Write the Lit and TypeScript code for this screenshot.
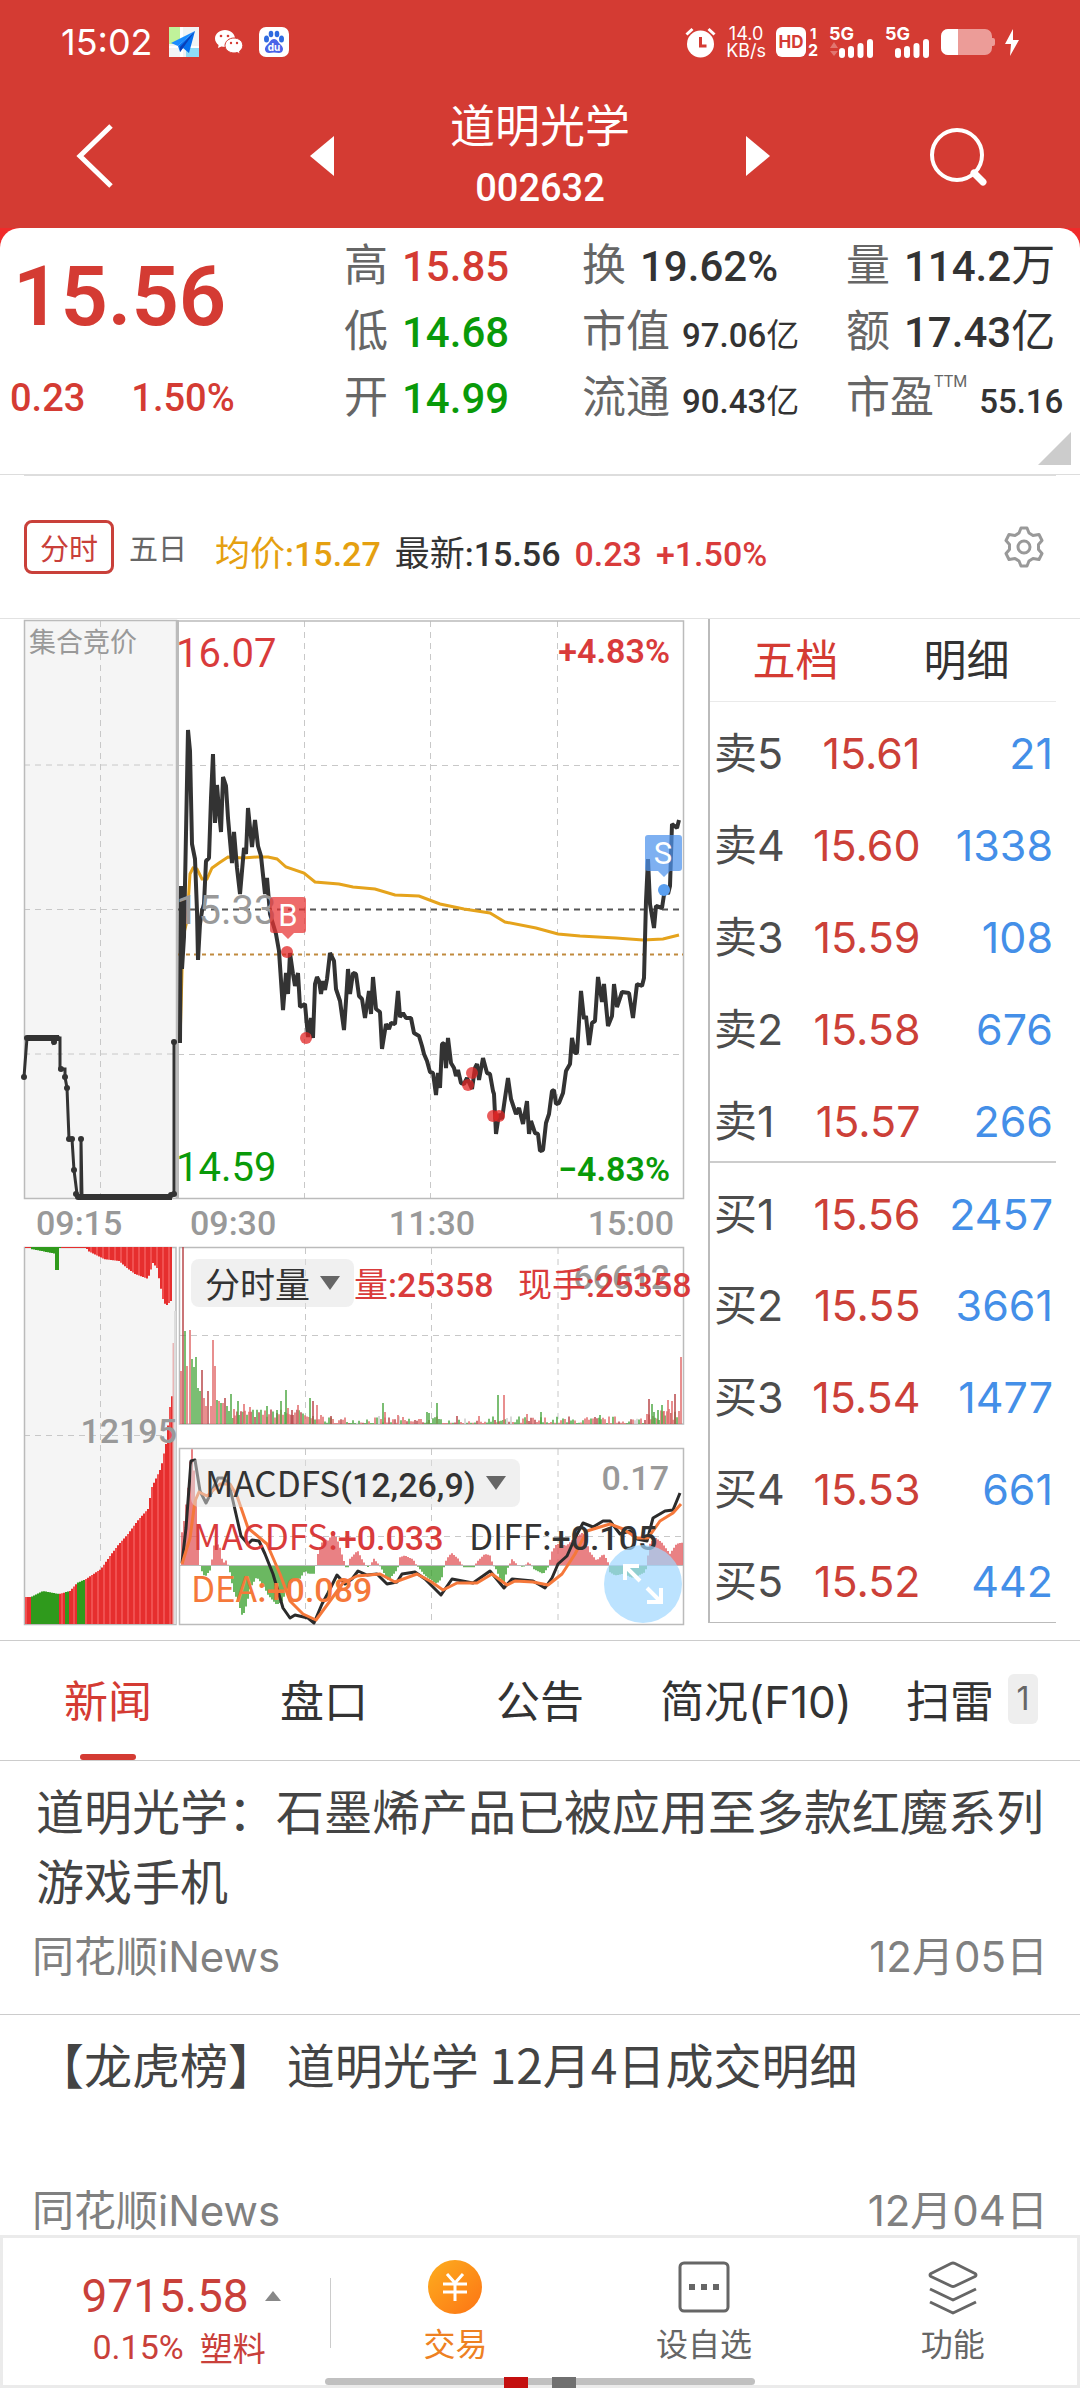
import { LitElement, html, svg, css } from "lit";
import { customElement, state } from "lit/decorators.js";

type Pair = [number, number];

const parse = (s: string): Pair[] =>
  s.trim().split(/\s+/).map((p) => p.split(",").map(Number) as Pair);

/** Linear interpolation through a list of key points. */
const lerp = (keys: Pair[], x: number): number => {
  if (x <= keys[0][0]) return keys[0][1];
  for (let i = 1; i < keys.length; i++) {
    const [x1, y1] = keys[i];
    if (x <= x1) {
      const [x0, y0] = keys[i - 1];
      return y0 + ((y1 - y0) * (x - x0)) / (x1 - x0 || 1);
    }
  }
  return keys[keys.length - 1][1];
};

const RED = "#d93b3b";
const GREEN = "#3aa02c";

const AUCTION =
  "24,458 27,419 54,419 54,423 58,419 60,419 60,450 65,450 65,458 67,469 69,520 72,520 74,551 77,575 78,578 81,578 81,520 82,578 170,578 172,575 174,575 174,423";
const AUCTION_DOTS =
  "24,458 27,419 54,423 57,419 61,450 65,458 67,469 69,520 72,520 74,551 76,575 81,520 78,578 171,576 174,575 174,423";
const PRICE =
  "180,424 181,267 182,350 184,318 188,111 190,132 192,225 195,240 197,292 198,341 200,305 202,292 204,285 206,242 209,239 211,179 213,135 215,204 217,166 219,192 221,213 223,158 226,167 228,199 232,244 234,213 237,249 240,275 244,229 246,235 248,189 252,228 255,201 258,227 261,237 265,275 267,259 270,295 276,315 279,332 283,391 286,354 288,375 290,334 293,355 295,367 298,354 300,388 305,385 308,418 311,399 313,419 315,365 317,358 319,362 321,375 323,362 325,371 327,360 330,334 334,342 336,370 340,382 344,411 346,382 348,350 350,375 353,354 356,355 359,377 362,380 365,399 369,372 371,395 373,358 376,390 380,393 382,430 386,405 389,410 391,404 395,405 398,372 400,398 403,394 406,399 411,399 414,414 419,417 422,427 424,435 427,442 430,453 433,454 436,476 438,454 440,469 442,425 444,424 446,449 448,419 451,444 454,449 456,457 458,451 461,464 464,465 467,459 472,470 475,449 477,445 479,461 483,439 487,454 490,455 493,472 494,475 496,515 499,495 502,500 505,479 508,459 511,480 514,489 516,495 519,489 523,505 527,482 529,515 531,502 535,514 538,515 540,532 543,531 546,504 549,495 552,472 554,471 556,485 559,484 563,474 566,452 570,445 572,419 575,434 577,434 581,372 584,400 586,397 589,426 592,404 595,402 598,358 602,383 604,365 608,407 612,397 614,365 617,388 622,373 629,374 633,399 637,365 642,367 644,359 646,282 648,240 650,285 654,309 656,287 662,289 665,269 668,275 670,267 672,205 677,209 679,201";
const AVERAGE =
  "180,424 183,318 187,302 190,255 193,249 197,250 202,260 207,260 212,249 219,244 228,238 243,239 257,238 268,238 277,240 286,248 304,254 315,263 339,265 353,268 375,270 395,276 419,277 440,285 464,290 490,294 505,303 536,309 547,312 558,315 580,317 616,319 643,321 663,320 679,316";
const TRADES = "287,333 306,419 472,454 468,466 493,497 499,497";

const DIFF =
  "182,316 186,281 191,214 195,213 200,244 206,256 211,246 218,231 223,231 229,237 233,254 241,289 248,297 252,293 259,294 265,307 273,327 283,361 290,371 295,368 308,371 314,376 322,357 328,346 337,328 345,337 352,332 358,324 367,328 377,327 387,337 397,335 402,327 415,325 425,332 441,348 452,332 473,336 490,324 504,341 512,332 533,334 545,341 552,331 558,317 567,309 575,291 583,276 593,280 603,274 610,274 620,287 630,284 637,292 647,294 653,271 665,264 673,263 680,246";
const DEA =
  "182,317 190,291 195,254 199,245 207,249 220,237 230,237 237,249 248,281 267,297 280,327 290,354 303,367 316,373 330,354 343,336 357,329 380,327 395,335 417,327 430,334 443,343 457,336 477,336 492,327 507,338 515,334 533,335 548,338 562,327 575,307 587,284 600,280 610,277 623,282 637,291 648,291 660,274 673,266 681,257";
const MACD_HIST = parse(
  "38,100 56,250 60,312 66,349 72,285 78,205 86,40 90,0 95,-15 105,-35 122,-12 125,0 128,55 140,70 152,50 158,5 168,15 175,0 180,-20 190,-75 205,-110 218,-155 232,-110 240,-70 260,-35 280,-60 295,-90 320,-118 335,-110 350,-75 370,-45 390,-40 405,-15 415,-25 435,-25 438,0 445,40 460,80 475,75 490,103 505,70 520,20 526,0 530,-10 538,0 540,20 563,45 575,20 588,0 590,-8 600,0 612,20 625,5 635,-10 655,-45 680,-15 686,0 690,25 705,30 730,18 740,0 745,-5 765,-30 800,-55 815,-40 823,0 830,20 845,38 865,20 878,0 880,-5 912,-5 920,10 945,35 960,30 970,0 975,-5 1000,-60 1012,-10 1018,0 1025,20 1045,0 1060,-5 1075,10 1085,0 1090,-10 1120,-25 1135,-5 1145,40 1160,65 1190,60 1210,80 1240,100 1260,40 1280,15 1300,35 1313,15 1320,-20 1335,-30 1360,-25 1390,-38 1425,-20 1432,0 1436,60 1455,85 1475,70 1500,35 1510,50 1520,65 1533,68",
);

const VOLUME_SPIKES: [number, number, string][] = [
  [181, 53, "r"], [183, 177, "d"], [185, 93, "g"], [187, 58, "r"], [190, 94, "r"], [192, 65, "g"],
  [194, 57, "g"], [196, 67, "g"], [198, 36, "g"], [200, 33, "g"], [202, 54, "d"], [204, 26, "r"],
  [206, 18, "r"], [208, 33, "d"], [211, 18, "r"], [213, 84, "r"], [215, 58, "r"], [217, 24, "g"],
  [219, 23, "r"], [221, 21, "g"], [223, 21, "r"], [225, 26, "d"], [227, 18, "g"], [229, 13, "g"],
  [231, 30, "g"], [234, 15, "r"], [238, 23, "g"], [244, 20, "r"], [250, 17, "r"], [267, 18, "g"],
  [277, 14, "g"], [281, 23, "g"], [286, 34, "g"], [288, 16, "r"], [292, 14, "d"], [298, 19, "r"],
  [310, 26, "g"], [313, 23, "d"], [317, 19, "r"], [331, 8, "d"], [383, 21, "g"], [385, 12, "r"],
  [398, 9, "r"], [427, 12, "g"], [429, 11, "g"], [437, 21, "g"], [498, 29, "g"], [504, 29, "r"],
  [527, 10, "r"], [541, 12, "g"], [600, 9, "g"], [649, 25, "d"], [652, 20, "g"], [654, 12, "g"],
  [658, 14, "g"], [662, 19, "g"], [664, 13, "r"], [668, 24, "r"], [672, 23, "r"], [675, 30, "d"],
  [681, 67, "r"],
];
const INKS: Record<string, string> = { r: "#e06a6a", g: "#4fa845", d: "#b8474a" };

const AUCTION_TOP = parse("86,2 87,4 103,12 118,14 126,21 134,27 147,32 152,16 156,21 162,52 165,59 170,54 171,2 176,2");
const AUCTION_BOTTOM = parse("26,350 30,350 42,344 58,347 69,344 76,336 85,332 100,322 109,309 118,297 127,287 138,272 147,262 151,240 160,221 165,197 169,160 172,144");

interface Quote { label: string; price: string; volume: string }
const ASKS: Quote[] = [
  { label: "卖5", price: "15.61", volume: "21" },
  { label: "卖4", price: "15.60", volume: "1338" },
  { label: "卖3", price: "15.59", volume: "108" },
  { label: "卖2", price: "15.58", volume: "676" },
  { label: "卖1", price: "15.57", volume: "266" },
];
const BIDS: Quote[] = [
  { label: "买1", price: "15.56", volume: "2457" },
  { label: "买2", price: "15.55", volume: "3661" },
  { label: "买3", price: "15.54", volume: "1477" },
  { label: "买4", price: "15.53", volume: "661" },
  { label: "买5", price: "15.52", volume: "442" },
];

const base = css`
  :host { display: block; }
  * { box-sizing: border-box; }
  button, a { font: inherit; color: inherit; text-decoration: none; }
  button { appearance: none; background: none; border: 0; padding: 0; margin: 0; }
  svg { display: block; }
  .num { font-family: Roboto, "Liberation Sans", sans-serif; font-weight: 500; }
`;

@customElement("status-bar")
class StatusBar extends LitElement {
  static styles = [base, css`
    .bar { display: flex; align-items: center; justify-content: space-between; height: 84px; padding: 0 61px; color: #fff; font-family: Inter, sans-serif; }
    .side { display: flex; align-items: center; gap: 16px; }
    .right { gap: 10px; }
    .right svg { overflow: visible; }
    .time { font-size: 36px; line-height: 40px; }
    .rate { font-size: 18px; line-height: 17px; text-align: center; }
    .mark { font-family: Inter, sans-serif; font-weight: 700; }
  `];

  private signal(arrows: boolean) {
    return html`<svg width="46" height="32" viewBox="0 0 46 32" aria-hidden="true">
      <text class="mark" x="0" y="14" font-size="18" fill="#fff">5G</text>
      ${arrows ? svg`<path d="M5 16l4 6H1zM5 30l4-5H1z" fill="#fff" opacity=".3"/>` : ""}
      <path d="M13 25v4M22 23v6M31.500 20v9M41 16v13" stroke="#fff" stroke-width="6" stroke-linecap="round"/>
    </svg>`;
  }

  render() {
    return html`<div class="bar">
      <div class="side">
        <span class="time">15:02</span>
        <svg width="30" height="30" viewBox="0 0 30 30" aria-hidden="true">
          <rect width="30" height="30" fill="#f1f3f4"/><path d="M0 0h11v17H0z" fill="#c0f29a"/>
          <path d="M17 20h13v10H17z" fill="#8fdcf8"/><path d="M11 0h3v30h-3zM0 19h30v2H0z" fill="#fff"/>
          <path d="M26 4L2 16l7 3z" fill="#1a8cff"/><path d="M26 4L9 19l2 6 3-4 6 5z" fill="#0670ee"/><path d="M26 4L11 20v5l3-4z" fill="#0a3fb8"/>
        </svg>
        <svg width="28" height="26" viewBox="0 0 28 26" aria-hidden="true">
          <path d="M10 1C4.500 1 0 4.800 0 9.500c0 2.600 1.400 4.900 3.600 6.400L3 19l3.400-1.600c1.100.3 2.300.5 3.600.5C15.500 17.900 20 14 20 9.500S15.500 1 10 1z" fill="#fff"/>
          <circle cx="6" cy="7" r="1.300" fill="#d43b33"/><circle cx="13" cy="7" r="1.300" fill="#d43b33"/>
          <path d="M19 9c-5 0-9 3.400-9 7.500S14 24 19 24c1.100 0 2.200-.2 3.200-.5l3 1.500-.7-2.700c2-1.400 3.300-3.500 3.300-5.800C27.800 12.400 24 9 19 9z" fill="#fff" stroke="#d43b33" stroke-width="1"/>
          <circle cx="16" cy="14" r="1.200" fill="#d43b33"/><circle cx="22" cy="14" r="1.200" fill="#d43b33"/>
        </svg>
        <svg width="30" height="30" viewBox="0 0 30 30" aria-hidden="true">
          <rect width="30" height="30" rx="7" fill="#fff"/>
          <g fill="#2f6be0"><ellipse cx="7.500" cy="12" rx="2.500" ry="3.500"/><ellipse cx="12" cy="7" rx="2.300" ry="3.300"/><ellipse cx="18" cy="7" rx="2.300" ry="3.300"/><ellipse cx="22.500" cy="12" rx="2.500" ry="3.500"/></g>
          <path d="M15 12c3 0 4 3 6 5s4 4 2.500 7-5 1.500-8.500 1.500-7 1.500-8.500-1.500S7 19 9 17s3-5 6-5z" fill="#4a63e8"/>
          <text class="mark" x="15" y="24" font-size="10" fill="#fff" text-anchor="middle">du</text>
        </svg>
      </div>
      <div class="side right">
        <svg width="31" height="31" viewBox="0 0 31 31" aria-hidden="true">
          <circle cx="15.500" cy="17" r="13.500" fill="#fff"/><path d="M1.500 7.500l6-5.500M29.500 7.500l-6-5.500" stroke="#fff" stroke-width="3"/>
          <path d="M15.500 10v9h6" fill="none" stroke="#d43b33" stroke-width="3"/>
        </svg>
        <div class="rate">14.0<br/>KB/s</div>
        <svg width="43" height="32" viewBox="0 0 43 32" aria-hidden="true">
          <rect y="1" width="30" height="30" rx="6" fill="#fff"/>
          <text class="mark" x="15" y="22" font-size="17" fill="#d43b33" text-anchor="middle">HD</text>
          <text class="mark" x="34" y="13" font-size="15" fill="#fff">1</text>
          <text class="mark" x="32" y="30" font-size="16" fill="#fff">2</text>
        </svg>
        ${this.signal(true)}${this.signal(false)}
        <svg width="54" height="28" viewBox="0 0 54 28" aria-hidden="true">
          <path d="M7 1h37a7 7 0 0 1 7 7v2h1a2 2 0 0 1 2 2v4a2 2 0 0 1-2 2h-1v2a7 7 0 0 1-7 7H7a7 7 0 0 1-7-7V8a7 7 0 0 1 7-7z" fill="#ec9c98"/>
          <path d="M7 1h10v26H7a7 7 0 0 1-7-7V8a7 7 0 0 1 7-7z" fill="#fff"/>
        </svg>
        <svg width="14" height="28" viewBox="0 0 14 28" aria-hidden="true"><path d="M8 1L0 16h6L5 28l9-16H8z" fill="#fff"/></svg>
      </div>
    </div>`;
  }
}

@customElement("title-bar")
class TitleBar extends LitElement {
  static styles = [base, css`
    .bar { display: grid; grid-template-columns: 1fr auto 1fr; align-items: center; height: 144px; padding: 0 76px; color: #fff; }
    .stock { display: flex; align-items: center; gap: 116px; }
    .names { display: flex; flex-direction: column; align-items: center; }
    .name { font-size: 45px; line-height: 64px; font-weight: 400; margin: 0; }
    .code { font-size: 38px; line-height: 64px; }
    .search { justify-self: end; margin-right: 16px; }
  `];
  render() {
    return html`<header class="bar">
      <button aria-label="返回"><svg width="38" height="68" viewBox="0 0 38 68"><path d="M35 4L4 34l31 30" fill="none" stroke="#fff" stroke-width="5"/></svg></button>
      <div class="stock">
        <button aria-label="上一只"><svg width="24" height="40" viewBox="0 0 24 40"><path d="M24 0v40L0 20z" fill="#fff"/></svg></button>
        <div class="names"><h1 class="name">道明光学</h1><span class="code num">002632</span></div>
        <button aria-label="下一只"><svg width="24" height="40" viewBox="0 0 24 40"><path d="M0 0v40l24-20z" fill="#fff"/></svg></button>
      </div>
      <button class="search" aria-label="搜索"><svg width="60" height="60" viewBox="0 0 60 60"><circle cx="29" cy="29" r="25" fill="none" stroke="#fff" stroke-width="4"/><path d="M46 47l9 9" stroke="#fff" stroke-width="7" stroke-linecap="round"/></svg></button>
    </header>`;
  }
}

@customElement("quote-summary")
class QuoteSummary extends LitElement {
  static styles = [base, css`
    .panel { display: grid; grid-template-columns: 344fr 238fr 264fr 234fr; height: 247px; position: relative; border-bottom: 1px solid #ddd; background: #fff; border-radius: 20px 20px 0 0; }
    .panel::after { content: ""; position: absolute; left: 24px; right: 24px; bottom: -2px; height: 1px; background: #ddd; }
    .last { padding: 21px 0 0 13px; color: #d43b33; }
    .price { font-size: 83px; line-height: 96px; font-weight: 600; }
    .change { display: flex; gap: 46px; font-size: 38px; line-height: 46px; padding-top: 30px; margin-left: -3px; }
    .col { margin: 0; padding-top: 1px; }
    .row { display: flex; align-items: baseline; gap: 14px; height: 66px; line-height: 66px; white-space: nowrap; }
    dt { font-size: 44px; color: #666; }
    dd { margin: 0; font-size: 44px; color: #333; font-weight: 400; }
    dd .num { font-size: 42px; }
    .small { font-size: 33px; }
    .small .num { font-size: 33px; }
    .tight { gap: 12px; }
    .red { color: #d43b33; }
    .green { color: #099a09; }
    sup { font-family: Roboto, sans-serif; font-size: 16px; line-height: 16px; vertical-align: 26px; }
    .corner { position: absolute; right: 9px; bottom: 9px; }
  `];
  render() {
    return html`<section class="panel">
      <div class="last">
        <div class="price num">15.56</div>
        <div class="change num"><span>0.23</span><span>1.50%</span></div>
      </div>
      <dl class="col">
        <div class="row"><dt>高</dt><dd class="red"><span class="num">15.85</span></dd></div>
        <div class="row"><dt>低</dt><dd class="green"><span class="num">14.68</span></dd></div>
        <div class="row"><dt>开</dt><dd class="green"><span class="num">14.99</span></dd></div>
      </dl>
      <dl class="col">
        <div class="row"><dt>换</dt><dd><span class="num">19.62%</span></dd></div>
        <div class="row tight"><dt>市值</dt><dd class="small"><span class="num">97.06</span>亿</dd></div>
        <div class="row tight"><dt>流通</dt><dd class="small"><span class="num">90.43</span>亿</dd></div>
      </dl>
      <dl class="col">
        <div class="row"><dt>量</dt><dd><span class="num">114.2</span>万</dd></div>
        <div class="row"><dt>额</dt><dd><span class="num">17.43</span>亿</dd></div>
        <div class="row tight"><dt>市盈<sup>TTM</sup></dt><dd class="small"><span class="num">55.16</span></dd></div>
      </dl>
      <svg class="corner" width="33" height="33" viewBox="0 0 33 33" aria-hidden="true"><path d="M33 0v33H0z" fill="#ccc"/></svg>
    </section>`;
  }
}

@customElement("chart-toolbar")
class ChartToolbar extends LitElement {
  static styles = [base, css`
    .bar { display: flex; align-items: center; height: 144px; padding: 0 36px 0 24px; border-bottom: 1px solid #e2e2e2; white-space: nowrap; }
    .active { height: 54px; width: 90px; border: 3px solid #c9403a; border-radius: 8px; color: #c9403a; font-size: 29px; line-height: 46px; }
    .plain { margin-left: 15px; color: #666; font-size: 29px; }
    .figures { display: flex; align-items: baseline; gap: 14px; margin: 12px auto 0 28px; font-size: 35px; line-height: 46px; color: #333; }
    .num { font-size: 34px; }
    .avg { color: #e5a010; }
    .red { color: #d93b3b; }
  `];
  render() {
    return html`<div class="bar">
      <button class="active">分时</button>
      <button class="plain">五日</button>
      <div class="figures">
        <span class="avg">均价<span class="num">:15.27</span></span>
        <span>最新<span class="num">:15.56</span></span>
        <span class="num red">0.23</span>
        <span class="num red">+1.50%</span>
      </div>
      <button aria-label="设置"><svg width="40" height="42" viewBox="0 0 40 42">
        <path d="M17 2h6l2 5 4 2.500 6-1 3 6-3.500 4v5l3.500 4-3 6-6-1-4 2.500-2 5h-6l-2-5-4-2.500-6 1-3-6 3.500-4v-5L2 14.500l3-6 6 1L15 7z" fill="none" stroke="#999" stroke-width="3" stroke-linejoin="round"/>
        <circle cx="20" cy="21" r="6" fill="none" stroke="#999" stroke-width="3"/></svg></button>
    </div>`;
  }
}

@customElement("intraday-charts")
class IntradayCharts extends LitElement {
  static styles = [base, css`
    .wrap { color: #333; }
    .plot { width: 100%; height: auto; overflow: visible; }
    .axis { display: grid; grid-template-columns: 190fr 484fr 34fr; height: 48px; align-items: center; color: #999; font-size: 34px; line-height: 48px; }
    .axis .first { padding-left: 36px; }
    .times { display: flex; justify-content: space-between; }
    .lower { position: relative; }
    .picker { position: absolute; left: 191px; height: 48px; display: flex; align-items: center; gap: 10px; padding: 0 14px; border-radius: 8px; background: rgba(226, 226, 226, 0.5); font-size: 35px; line-height: 48px; color: #333; white-space: nowrap; }
    .volume { top: 12px; }
    .macd { top: 212px; }
    .picker .num { font-size: 34px; }
    .expand { position: absolute; right: 26px; bottom: 2px; width: 78px; height: 78px; border-radius: 50%; background: rgba(160, 215, 255, 0.7); display: grid; place-items: center; }
    .cjk { font-family: "Noto Sans CJK SC", sans-serif; }
    .grid { fill: none; stroke: #c8c8c8; stroke-dasharray: 6 5; }
    .frame { fill: none; stroke: #bbb; stroke-width: 1.5; }
  `];

  private price() {
    const dot = (p: Pair, r: number, c: string) => svg`<circle cx=${p[0]} cy=${p[1]} r=${r} fill=${c}/>`;
    return html`<svg class="plot" viewBox="0 0 708 580" role="img" aria-label="分时走势">
      <rect x="24" y="1" width="152" height="578" fill="#f5f5f5"/>
      <path class="grid" d="M100.500 2v577M24 146h152M24 290.500h152M24 435h152M304.500 2v577M430.500 2v577M557.500 2v577M178 146.500h505M178 435.500h505"/>
      <path class="frame" d="M24.500 1.500h152v578h-152zM178 2h505.500v577.500H178z"/>
      <path d="M177.500 1v579" stroke="#bbb" stroke-width="3"/>
      <path d="M178 290.500h505" stroke="#555" stroke-width="2" stroke-dasharray="6 5"/>
      <path d="M178 335.500h505" stroke="#c08a3e" stroke-width="2" stroke-dasharray="4 4"/>
      <text class="cjk" x="29" y="33" font-size="27" fill="#999">集合竞价</text>
      <polyline points=${AVERAGE} fill="none" stroke="#e5a31c" stroke-width="3"/>
      <polyline points=${PRICE} fill="none" stroke="#333" stroke-width="4" stroke-linejoin="bevel"/>
      <polyline points=${AUCTION} fill="none" stroke="#333" stroke-width="3"/>
      <path d="M27 419h32M78 578h94" stroke="#333" stroke-width="6"/>
      ${parse(AUCTION_DOTS).map((p) => dot(p, 3, "#333"))}
      <g font-family="Roboto, sans-serif" font-size="40">
        <text x="176" y="48" fill=${RED}>16.07</text>
        <text x="176" y="305" fill="#999">15.33</text>
        <text x="176" y="562" fill="#099a09">14.59</text>
        <g font-size="34" font-weight="600" text-anchor="end">
          <text x="670" y="44" fill=${RED}>+4.83%</text>
          <text x="670" y="562" fill="#099a09">−4.83%</text>
        </g>
      </g>
      ${parse(TRADES).map((p) => dot(p, 6, "rgba(226,38,38,.75)"))}
      <path d="M273 278h30a3 3 0 0 1 3 3v30a3 3 0 0 1-3 3h-9l-6 6-6-6h-9a3 3 0 0 1-3-3v-30a3 3 0 0 1 3-3z" fill="rgba(232,50,50,.72)"/>
      <text x="288" y="307" font-family="Roboto, sans-serif" font-size="31" fill="#fff" text-anchor="middle">B</text>
      <path d="M648 216h31a3 3 0 0 1 3 3v30a3 3 0 0 1-3 3h-9l-6 6-6-6h-10a3 3 0 0 1-3-3v-30a3 3 0 0 1 3-3z" fill="rgba(76,146,236,.72)"/>
      <text x="663" y="245" font-family="Roboto, sans-serif" font-size="31" fill="#fff" text-anchor="middle">S</text>
      <circle cx="664" cy="271" r="6" fill="#5a9ff0"/>
    </svg>`;
  }

  private auctionBars() {
    const out = [];
    for (let x = 25; x < 172; x += 2) {
      const top = lerp(AUCTION_BOTTOM, x);
      const green = (x > 29 && x < 59) || (x > 63 && x < 68) || (x > 76 && x < 84);
      out.push(svg`<path d=${`M${x + 1} ${top}V377`} stroke=${green ? "#2f9a1c" : x % 6 === 1 ? "#f05050" : "#e62e2e"} stroke-width="2"/>`);
    }
    for (let x = 25; x < 86; x += 2) {
      const h = x > 54 && x < 59 ? 23 : x > 30 && x < 56 ? 2 + ((x - 30) * 5) / 26 : 1;
      out.push(svg`<path d=${`M${x + 1} 0v${h}`} stroke=${x > 30 && x < 60 ? "#2f9a1c" : "#e62e2e"} stroke-width="2"/>`);
    }
    for (let x = 86; x < 171; x += 2) {
      out.push(svg`<path d=${`M${x + 1} 0v${lerp(AUCTION_TOP, x)}`} stroke=${x % 6 === 0 ? "#f05050" : "#e62e2e"} stroke-width="2"/>`);
    }
    return out;
  }

  private volumeBars() {
    const out = [];
    let seed = 7;
    const rand = () => (seed = (seed * 16807) % 2147483647) / 2147483647;
    for (let x = 233; x < 680; x += 2) {
      const r = rand();
      const busy = x < 305 ? 6 + r * 9 : x < 325 ? 4 + r * 5 : x > 646 ? 4 + r * 11 : 1 + r * r * 7;
      const c = rand();
      out.push(svg`<path d=${`M${x} 177v${-busy}`} stroke=${c < 0.42 ? INKS.r : c < 0.58 ? INKS.d : c < 0.95 ? INKS.g : "#ccc"} stroke-width="1.500"/>`);
    }
    return out.concat(VOLUME_SPIKES.map(([x, h, c]) => svg`<path d=${`M${x} 177v${-h}`} stroke=${INKS[c]} stroke-width="1.500"/>`));
  }

  private macdBars() {
    const out = [];
    for (let x = 182; x < 683; x += 2) {
      const h = lerp(MACD_HIST, (x - 170) * 3) / 3;
      out.push(svg`<path d=${`M${x} 318.500v${-h}`} stroke=${h > 0 ? "#e2575b" : GREEN} stroke-width="1.500"/>`);
    }
    return out;
  }

  render() {
    return html`<div class="wrap">
      ${this.price()}
      <div class="axis num"><span class="first">09:15</span><div class="times"><span>09:30</span><span>11:30</span><span>15:00</span></div></div>
      <div class="lower">
        <svg class="plot" viewBox="0 0 708 378" role="img" aria-label="成交量与MACD">
          <rect x="24" y="0" width="152" height="377" fill="#f5f5f5"/>
          <path class="grid" d="M100.500 0v377M24 188.500h152M305.500 1v176M431.500 1v176M558 1v176M180 88.500h503M305.500 202v175M431.500 202v175M558 202v175M180 289.500h503"/>
          <path class="frame" d="M24.500 .5h151.500v377H24.500zM179.500 .5h504v176.500h-504zM179.500 201.500h504v176h-504z"/>
          ${this.auctionBars()}
          <path d="M173.500 96v281" stroke="#e8b5b5" stroke-width="2"/><path d="M175 64v313" stroke="#ddd" stroke-width="2"/>
          ${this.volumeBars()}
          ${this.macdBars()}
          <path d="M180 318.500h503" stroke="#bbb" stroke-width="1"/>
          <polyline points=${DIFF} fill="none" stroke="#2b2b2b" stroke-width="3" stroke-linejoin="round"/>
          <polyline points=${DEA} fill="none" stroke="#f5783a" stroke-width="3" stroke-linejoin="round"/>
          <g font-family="Roboto, sans-serif" font-size="34" font-weight="500" fill="#999" text-anchor="end">
            <text x="177" y="196">12195</text><text x="670" y="42">66612</text><text x="669" y="243">0.17</text>
          </g>
          <g font-family="Roboto, sans-serif" font-size="34" font-weight="500">
            <text x="354" y="50" fill=${RED}><tspan class="cjk" font-weight="400" font-size="34">量</tspan>:25358</text>
            <text x="518" y="50" fill=${RED}><tspan class="cjk" font-weight="400" font-size="34">现手</tspan>:25358</text>
            <text x="193" y="303" fill=${RED}><tspan class="cjk" font-weight="400" font-size="35">MACDFS:</tspan>+0.033</text>
            <text x="469" y="303" fill="#333"><tspan class="cjk" font-weight="400" font-size="35">DIFF:</tspan>+0.105</text>
            <text x="191" y="355" fill="#f5783a"><tspan class="cjk" font-weight="400" font-size="35">DEA:</tspan>+0.089</text>
          </g>
        </svg>
        <button class="picker volume">分时量<svg width="20" height="14" viewBox="0 0 20 14"><path d="M0 0h20L10 14z" fill="#666"/></svg></button>
        <button class="picker macd"><span>MACDFS<span class="num">(12,26,9)</span></span><svg width="20" height="14" viewBox="0 0 20 14"><path d="M0 0h20L10 14z" fill="#666"/></svg></button>
        <button class="expand" aria-label="全屏"><svg width="46" height="46" viewBox="0 0 46 46"><path d="M20 20L5 5M5 19V5h14M27 27l14 14M41 27v14H27" fill="none" stroke="#fff" stroke-width="4"/></svg></button>
      </div>
    </div>`;
  }
}

@customElement("order-book")
class OrderBook extends LitElement {
  @state() private tab = 0;
  static styles = [base, css`
    .book { margin-right: 24px; border-left: 2px solid #bbb; border-bottom: 1px solid #bbb; }
    .tabs { display: grid; grid-template-columns: 1fr 1fr; height: 83px; padding: 0 4px 6px 0; border-bottom: 1px solid #eaeaea; font-size: 43px; line-height: 76px; color: #333; }
    .tabs .on { color: #d43b33; }
    table { width: 100%; border-collapse: collapse; font-family: Inter, "Noto Sans CJK SC", sans-serif; font-size: 43px; line-height: 60px; }
    td, th { padding: 10px 0 0; font-weight: 400; height: 92px; white-space: nowrap; }
    .bids { border-top: 2px solid #ccc; }
    th { text-align: left; padding-left: 4px; color: #4d4d4d; }
    .price { text-align: right; color: #cc4038; width: 38%; padding-right: 4px; }
    .volume { text-align: right; color: #448fe8; padding-right: 3px; width: 38%; }
  `];
  private rows(list: Quote[]) {
    return list.map((q) => html`<tr><th scope="row">${q.label}</th><td class="price">${q.price}</td><td class="volume">${q.volume}</td></tr>`);
  }
  render() {
    return html`<section class="book">
      <div class="tabs">${["五档", "明细"].map((t, i) => html`<button class=${this.tab === i ? "on" : ""} @click=${() => (this.tab = i)}>${t}</button>`)}</div>
      <table><tbody>${this.rows(ASKS)}</tbody><tbody class="bids">${this.rows(BIDS)}</tbody></table>
    </section>`;
  }
}

@customElement("news-section")
class NewsSection extends LitElement {
  @state() private tab = 0;
  static styles = [base, css`
    .tabs { display: grid; grid-template-columns: repeat(5, 1fr); height: 121px; margin-top: 15px; border-top: 1px solid #ccc; border-bottom: 1px solid #ccc; font-size: 44px; color: #333; font-family: Inter, "Noto Sans CJK SC", sans-serif; }
    .tab { position: relative; display: flex; align-items: center; justify-content: center; gap: 14px; white-space: nowrap; padding-bottom: 3px; }
    .on { color: #d43b33; }
    .on::after { content: ""; position: absolute; left: 50%; bottom: 0; width: 56px; margin-left: -28px; height: 6px; border-radius: 3px; background: #d43b33; }
    .badge { width: 30px; height: 50px; line-height: 50px; border-radius: 6px; background: #eee; color: #666; font-size: 32px; text-align: center; }
    .item { display: block; padding: 13px 32px 15px; border-bottom: 1px solid #ccc; }
    .title { margin: 0 0 0 4px; font-size: 48px; line-height: 70px; min-height: 140px; font-weight: 400; color: #444; }
    .meta { display: flex; justify-content: space-between; color: #808080; font-size: 42px; line-height: 85px; font-family: Inter, "Noto Sans CJK SC", sans-serif; }
  `];
  render() {
    const tabs = ["新闻", "盘口", "公告", "简况(F10)", "扫雷"];
    const news = [
      ["道明光学：石墨烯产品已被应用至多款红魔系列游戏手机", "12月05日"],
      ["【龙虎榜】 道明光学 12月4日成交明细", "12月04日"],
    ];
    return html`<nav class="tabs">${tabs.map((t, i) => html`<button class="tab ${this.tab === i ? "on" : ""}" @click=${() => (this.tab = i)}>${t}${i === 4 ? html`<span class="badge">1</span>` : ""}</button>`)}</nav>
      ${news.map(([title, date]) => html`<a class="item" href="#"><h2 class="title">${title}</h2><div class="meta"><span>同花顺iNews</span><time>${date}</time></div></a>`)}`;
  }
}

@customElement("bottom-bar")
class BottomBar extends LitElement {
  static styles = [base, css`
    .bar { position: relative; display: grid; grid-template-columns: 330fr 250fr 250fr 250fr; height: 153px; background: #fff; border: 3px solid #ebebeb; }
    .index { color: #c9403a; display: flex; flex-direction: column; align-items: center; padding-top: 30px; position: relative; }
    .index::after { content: ""; position: absolute; right: 0; top: 40px; height: 70px; width: 1px; background: #ccc; }
    .value { display: flex; align-items: center; gap: 16px; font-family: Roboto, sans-serif; font-size: 46px; line-height: 56px; padding-left: 28px; }
    .sub { display: flex; gap: 16px; font-size: 33px; line-height: 46px; padding-left: 24px; }
    .sub .pct { font-family: Roboto, sans-serif; font-size: 34px; }
    .action { display: flex; flex-direction: column; align-items: center; padding-top: 21px; gap: 4px; font-size: 32px; line-height: 46px; color: #666; }
    .trade { color: #ee8122; }
    .home { position: absolute; left: 30%; right: 30%; bottom: 0; height: 7px; border-radius: 4px; background: #c0c0c0; display: flex; justify-content: center; gap: 24px; align-items: flex-end; }
    .home i { width: 24px; height: 11px; background: #c40f0f; margin-bottom: -3px; }
    .home .grey { background: #707070; }
  `];
  render() {
    return html`<footer class="bar">
      <button class="index">
        <span class="value">9715.58<svg width="16" height="10" viewBox="0 0 16 10"><path d="M8 0l8 10H0z" fill="#888"/></svg></span>
        <span class="sub"><span class="pct">0.15%</span><span>塑料</span></span>
      </button>
      <button class="action trade"><svg width="56" height="56" viewBox="0 0 56 56"><defs><linearGradient id="coin" x1="0" y1="0" x2="1" y2="1"><stop offset="0" stop-color="#fdae1f"/><stop offset="1" stop-color="#fd7414"/></linearGradient></defs><circle cx="28" cy="28" r="27" fill="url(#coin)"/><path d="M20 15l8 9 8-9M16 25h24M16 33h24M28 24v18" fill="none" stroke="#fff" stroke-width="3"/></svg>交易</button>
      <button class="action"><svg width="56" height="56" viewBox="0 0 56 56"><rect x="4" y="4" width="48" height="48" rx="4" fill="none" stroke="#666" stroke-width="3"/><path d="M13 25h6v6h-6zM25 25h6v6h-6zM37 25h6v6h-6z" fill="#666"/></svg>设自选</button>
      <button class="action"><svg width="56" height="56" viewBox="0 0 56 56"><path d="M26 4.500q2-1 4 0l20 10q2 1.500 0 3L30 27q-2 1-4 0L6 17.500q-2-1.500 0-3zM5 30l23 11 23-11M5 43l23 11 23-11" fill="none" stroke="#666" stroke-width="3" stroke-linejoin="round"/></svg>功能</button>
      <div class="home"><i></i><i class="grey"></i></div>
    </footer>`;
  }
}

@customElement("app-root")
class AppRoot extends LitElement {
  static styles = [base, css`
    :host { display: block; min-height: 100vh; background: #fff; font-family: "Noto Sans CJK SC", sans-serif; }
    .page { display: flex; flex-direction: column; min-height: 100vh; }
    .head { background: #d43b33; }
    .under { background: #f02a2a; }
    .market { display: grid; grid-template-columns: 708fr 372fr; }
    .news { flex: 1 0 0; min-height: 0; }
    .dock { position: sticky; bottom: 0; }
  `];
  render() {
    return html`<div class="page">
      <div class="head"><status-bar></status-bar><title-bar></title-bar></div>
      <quote-summary class="under"></quote-summary>
      <chart-toolbar></chart-toolbar>
      <main class="market"><intraday-charts></intraday-charts><order-book></order-book></main>
      <news-section class="news"></news-section>
      <bottom-bar class="dock"></bottom-bar>
    </div>`;
  }
}
